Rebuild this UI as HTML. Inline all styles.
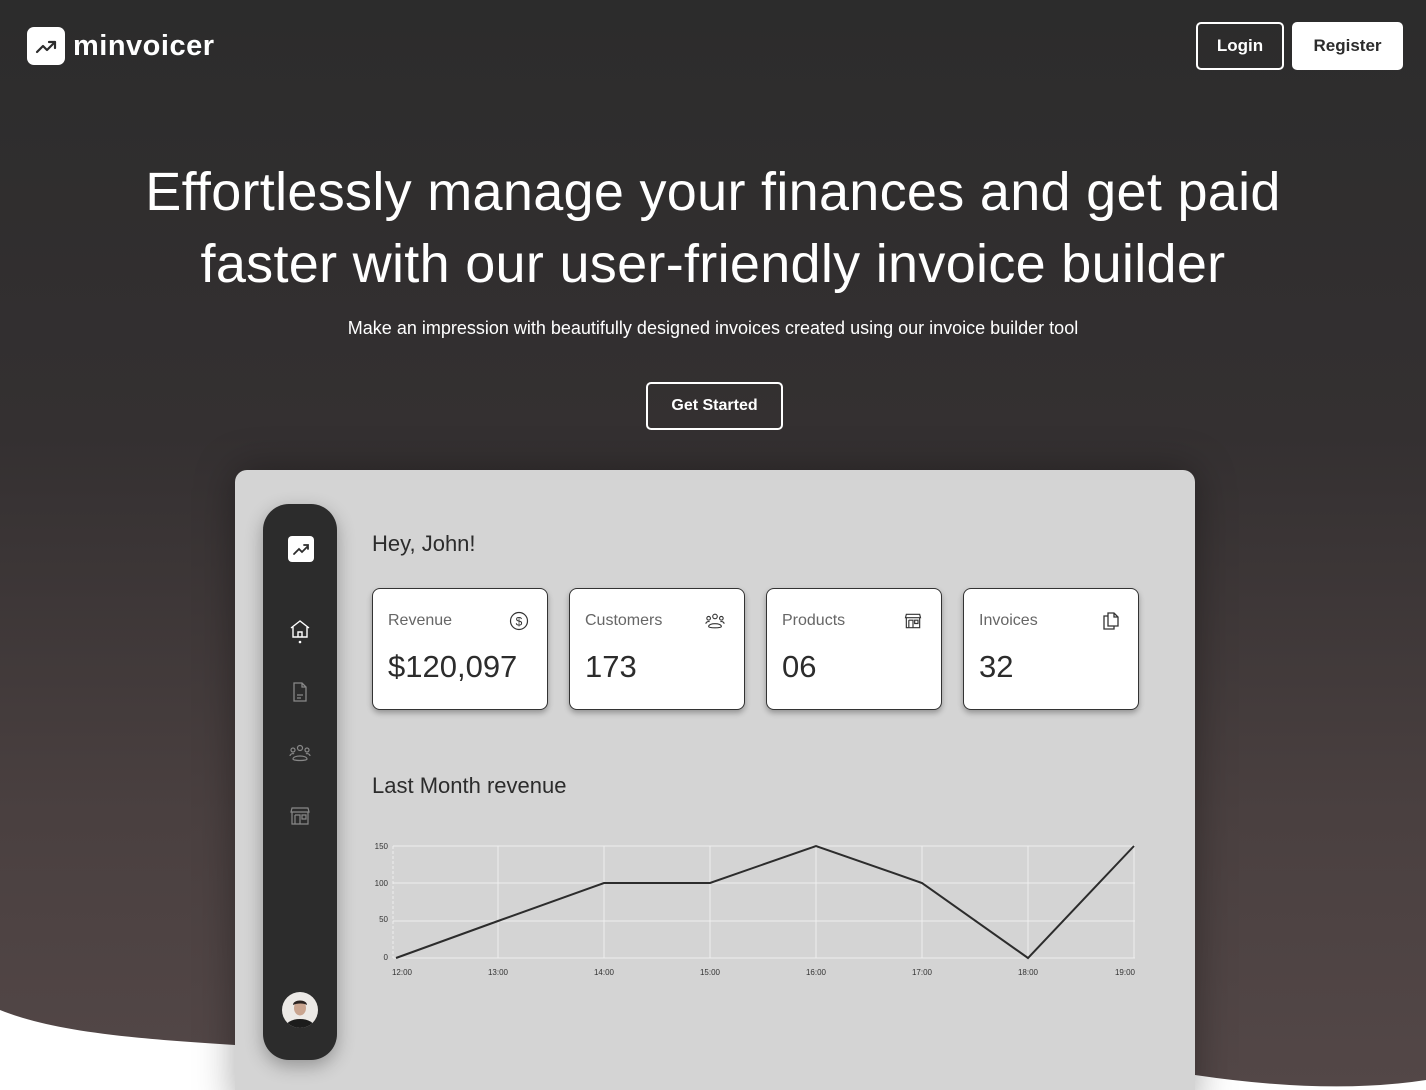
<!DOCTYPE html>
<html><head><meta charset="utf-8">
<style>
*{margin:0;padding:0;box-sizing:border-box}
html,body{width:1426px;height:1090px;overflow:hidden;background:#fff}
#wrap{position:relative;width:1426px;height:1090px;overflow:hidden;font-family:"Liberation Sans",sans-serif;color:#fff}
.bg{position:absolute;left:0;top:0}
.logo{position:absolute;left:27px;top:27px;display:flex;align-items:center}
.logo .ic{width:38px;height:38px;background:#fff;border-radius:7px;display:flex;align-items:center;justify-content:center}
.logo span{font-size:29px;font-weight:bold;margin-left:8px;letter-spacing:0.5px}
.btn{position:absolute;top:22px;height:48px;border-radius:5px;font-weight:bold;font-size:17px;display:flex;align-items:center;justify-content:center}
h1{position:absolute;top:156px;left:0;width:1426px;text-align:center;font-size:54px;font-weight:normal;line-height:72px;letter-spacing:0.3px}
.sub{position:absolute;top:318px;width:1426px;text-align:center;font-size:18px}
.gs{position:absolute;left:646px;top:382px;width:137px;height:48px;border:2px solid #fff;border-radius:5px;font-weight:bold;font-size:16px;display:flex;align-items:center;justify-content:center}
.panel{position:absolute;left:235px;top:470px;width:960px;height:640px;background:#d4d4d4;border-radius:12px;box-shadow:0 0 40px rgba(0,0,0,0.35);color:#2c2c2c}
.side{position:absolute;left:28px;top:34px;width:74px;height:556px;background:#2c2c2c;border-radius:26px;box-shadow:0 6px 18px rgba(0,0,0,0.3)}
.side svg{position:absolute;left:25px}
.hey{position:absolute;left:137px;top:61px;font-size:22px}
.card{position:absolute;top:118px;width:176px;height:122px;background:#fff;border:1px solid #333;border-radius:8px;box-shadow:0 3px 6px rgba(0,0,0,0.3)}
.card .t{position:absolute;left:15px;top:23px;font-size:16px;color:#666}
.card .v{position:absolute;left:15px;top:60px;font-size:31px;color:#2c2c2c}
.card svg{position:absolute;right:18px;top:22px}
.lm{position:absolute;left:137px;top:303px;font-size:22px}
</style></head><body><div id="wrap">
<svg class="bg" width="1426" height="1090" viewBox="0 0 1426 1090"><defs><linearGradient id="g" x1="0" y1="0" x2="0" y2="1"><stop offset="0" stop-color="#2c2c2c"/><stop offset="0.4" stop-color="#343031"/><stop offset="0.75" stop-color="#4a4040"/><stop offset="1" stop-color="#534747"/></linearGradient></defs><path d="M0 0H1426V1080Q1330 1095 1195 1075C900 1058 400 1060 235 1045C120 1038 50 1030 0 1010Z" fill="url(#g)"/></svg>
<div class="logo"><div class="ic"><svg width="24" height="24" viewBox="0 0 24 24" fill="none" stroke="#2c2c2c" stroke-width="2.2" stroke-linecap="round" stroke-linejoin="round"><path d="M3 18l6-6 4 4 8-8"/><path d="M15 8h6v6"/></svg></div><span>minvoicer</span></div>
<div class="btn" style="left:1196px;width:88px;border:2px solid #fff;color:#fff">Login</div>
<div class="btn" style="left:1292px;width:111px;background:#fff;color:#2c2c2c">Register</div>
<h1>Effortlessly manage your finances and get paid<br>faster with our user-friendly invoice builder</h1>
<div class="sub">Make an impression with beautifully designed invoices created using our invoice builder tool</div>
<div class="gs">Get Started</div>
<div class="panel">
 <div class="side">
  <svg style="top:32px" width="26" height="26" viewBox="0 0 26 26"><rect width="26" height="26" rx="4" fill="#fff"/><path d="M6 18l5-5 3 3 6-6M16 9h4v4" fill="none" stroke="#2c2c2c" stroke-width="1.8" stroke-linecap="round"/></svg>
  <svg style="top:114px" width="24" height="26" viewBox="0 0 24 26" fill="none" stroke="#fff" stroke-width="1.4"><path d="M3 10L12 3l9 7M5 9v10h14V9M10 19v-5h4v5"/><circle cx="12" cy="24" r="1.3" fill="#fff" stroke="none"/></svg>
  <svg style="top:176px" width="24" height="24" viewBox="0 0 24 24" fill="none" stroke="#888" stroke-width="1.3"><path d="M6 3h8l4 4v14H6zM14 3v4h4M9 15h6M9 18h4"/></svg>
  <svg style="top:236px" width="24" height="24" viewBox="0 0 24 24" fill="none" stroke="#888" stroke-width="1.2"><circle cx="12" cy="8" r="2.5"/><circle cx="5" cy="10" r="2"/><circle cx="19" cy="10" r="2"/><path d="M5 19c0-4 14-4 14 0c0 2-14 2-14 0M2 16c0-2 3-3 4-2M22 16c0-2-3-3-4-2"/></svg>
  <svg style="top:300px" width="24" height="24" viewBox="0 0 24 24" fill="none" stroke="#888" stroke-width="1.2"><path d="M4 4h16l1 4H3zM4 8v12h16V8M7 11h5v9M7 11v9M14 11h4v4h-4z"/></svg>
  <svg style="top:488px;left:19px" width="36" height="36" viewBox="0 0 36 36"><defs><clipPath id="c"><circle cx="18" cy="18" r="18"/></clipPath></defs><g clip-path="url(#c)"><rect width="36" height="36" fill="#ece9e6"/><ellipse cx="18" cy="36" rx="15" ry="9" fill="#1c1c1c"/><ellipse cx="18" cy="16" rx="6" ry="7.5" fill="#c9a48f"/><path d="M11 13c0-6 14-6 14 0c-3-2-10-2-14 0z" fill="#2a2220"/></g></svg>
 </div>
 <div class="hey">Hey, John!</div>
 <div class="card" style="left:137px"><div class="t">Revenue</div><svg width="20" height="20" viewBox="0 0 20 20"><circle cx="10" cy="10" r="8.5" fill="none" stroke="#333" stroke-width="1.2"/><text x="10" y="14.5" font-size="12" text-anchor="middle" fill="#333" font-family="Liberation Sans">$</text></svg><div class="v">$120,097</div></div>
 <div class="card" style="left:334px"><div class="t">Customers</div><svg width="22" height="20" viewBox="0 0 24 22" fill="none" stroke="#333" stroke-width="1.2"><circle cx="12" cy="6" r="2.5"/><circle cx="5" cy="8" r="2"/><circle cx="19" cy="8" r="2"/><path d="M5 17c0-4 14-4 14 0c0 2-14 2-14 0M2 14c0-2 3-3 4-2M22 14c0-2-3-3-4-2"/></svg><div class="v">173</div></div>
 <div class="card" style="left:531px"><div class="t">Products</div><svg width="20" height="20" viewBox="0 0 24 24" fill="none" stroke="#333" stroke-width="1.4"><path d="M4 4h16l1 4H3zM4 8v12h16V8M7 11h5v9M7 11v9M14 11h4v4h-4z"/></svg><div class="v">06</div></div>
 <div class="card" style="left:728px"><div class="t">Invoices</div><svg width="18" height="20" viewBox="0 0 18 20" fill="none" stroke="#333" stroke-width="1.3"><path d="M6 2h6l4 4v9H6zM12 2v4h4M6 5H2v13h10v-3"/></svg><div class="v">32</div></div>
 <div class="lm">Last Month revenue</div>
 <svg style="position:absolute;left:0;top:0" width="960" height="520" viewBox="235 470 960 520" font-family="Liberation Sans" font-size="8" fill="#333">
  <g stroke="#eee" stroke-width="1">
   <line x1="393" y1="846" x2="1135" y2="846"/><line x1="393" y1="883" x2="1135" y2="883"/><line x1="393" y1="921" x2="1135" y2="921"/><line x1="393" y1="958" x2="1135" y2="958"/>
   <line x1="498" y1="846" x2="498" y2="958"/><line x1="604" y1="846" x2="604" y2="958"/><line x1="710" y1="846" x2="710" y2="958"/><line x1="816" y1="846" x2="816" y2="958"/><line x1="922" y1="846" x2="922" y2="958"/><line x1="1028" y1="846" x2="1028" y2="958"/><line x1="1134" y1="846" x2="1134" y2="958"/>
   <line x1="393" y1="846" x2="393" y2="958" stroke-dasharray="3 2"/>
  </g>
  <polyline points="396,958 498,921 604,883 710,883 816,846 922,883 1028,958 1134,846" fill="none" stroke="#2c2c2c" stroke-width="2"/>
  <text x="388" y="849" text-anchor="end">150</text><text x="388" y="886" text-anchor="end">100</text><text x="388" y="922" text-anchor="end">50</text><text x="388" y="960" text-anchor="end">0</text>
  <g text-anchor="middle"><text x="402" y="975">12:00</text><text x="498" y="975">13:00</text><text x="604" y="975">14:00</text><text x="710" y="975">15:00</text><text x="816" y="975">16:00</text><text x="922" y="975">17:00</text><text x="1028" y="975">18:00</text><text x="1125" y="975">19:00</text></g>
 </svg>
</div>
</div></body></html>
